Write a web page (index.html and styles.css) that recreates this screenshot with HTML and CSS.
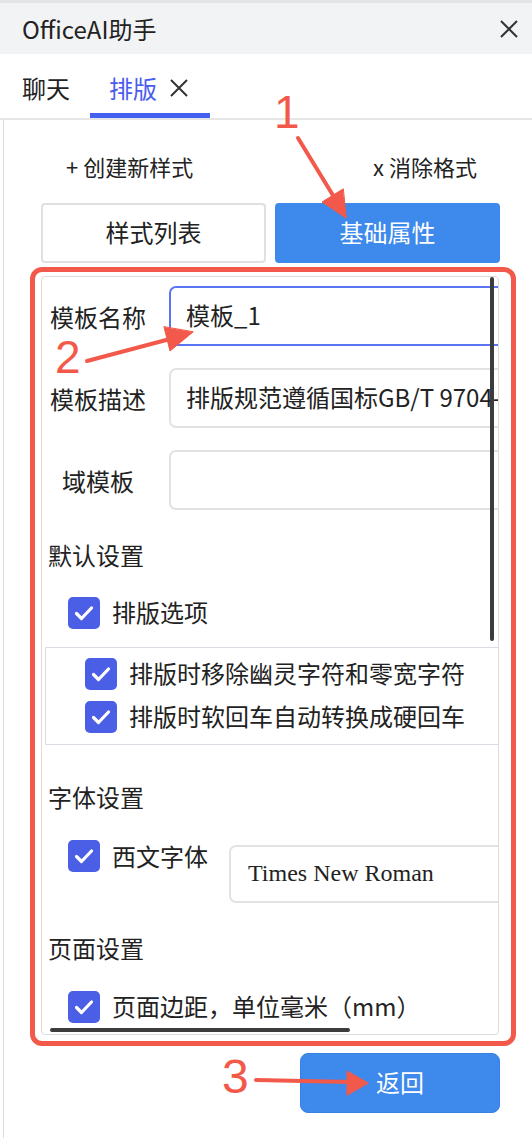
FILE: index.html
```html
<!DOCTYPE html>
<html lang="zh-CN">
<head>
<meta charset="utf-8">
<title>OfficeAI助手</title>
<link rel="stylesheet" href="styles.css">
</head>
<body>
<header class="titlebar">
  <span class="title">OfficeAI助手</span>
  <svg class="close" width="20" height="20" viewBox="0 0 20 20"><path d="M2 2L18 18M18 2L2 18" stroke="#333" stroke-width="2" fill="none"/></svg>
</header>
<nav class="tabbar">
  <div class="tab">聊天</div>
  <div class="tab active">排版
    <svg class="tabx" width="20" height="20" viewBox="0 0 20 20"><path d="M2 2L18 18M18 2L2 18" stroke="#333" stroke-width="2" fill="none"/></svg>
  </div>
</nav>
<main class="content">
  <div class="actions">
    <span>+ 创建新样式</span>
    <span>x 消除格式</span>
  </div>
  <div class="seg">
    <button class="seg-btn">样式列表</button>
    <button class="seg-btn primary">基础属性</button>
  </div>
  <div class="panel-wrap">
    <section class="panel">
      <div class="form">
        <div class="form-row">
          <label class="form-label">模板名称</label>
          <input class="field focus" value="模板_1">
        </div>
        <div class="form-row">
          <label class="form-label">模板描述</label>
          <input class="field" value="排版规范遵循国标GB/T 9704-2012">
        </div>
        <div class="form-row">
          <label class="form-label">域模板</label>
          <input class="field" value="">
        </div>
      </div>

      <h3 class="section">默认设置</h3>
      <div class="check main-check">
        <svg class="cb" width="32" height="32" viewBox="0 0 32 32"><rect width="32" height="32" rx="5" fill="#4a5fe6"/><path d="M8.5 16.5L13.5 21.5L23.5 11" stroke="#fff" stroke-width="3.2" fill="none" stroke-linecap="round" stroke-linejoin="round"/></svg>
        <span>排版选项</span>
      </div>
      <div class="subbox">
        <div class="check">
          <svg class="cb" width="32" height="32" viewBox="0 0 32 32"><rect width="32" height="32" rx="5" fill="#4a5fe6"/><path d="M8.5 16.5L13.5 21.5L23.5 11" stroke="#fff" stroke-width="3.2" fill="none" stroke-linecap="round" stroke-linejoin="round"/></svg>
          <span>排版时移除幽灵字符和零宽字符</span>
        </div>
        <div class="check">
          <svg class="cb" width="32" height="32" viewBox="0 0 32 32"><rect width="32" height="32" rx="5" fill="#4a5fe6"/><path d="M8.5 16.5L13.5 21.5L23.5 11" stroke="#fff" stroke-width="3.2" fill="none" stroke-linecap="round" stroke-linejoin="round"/></svg>
          <span>排版时软回车自动转换成硬回车</span>
        </div>
      </div>

      <h3 class="section font-section">字体设置</h3>
      <div class="font-row">
        <svg class="cb" width="32" height="32" viewBox="0 0 32 32"><rect width="32" height="32" rx="5" fill="#4a5fe6"/><path d="M8.5 16.5L13.5 21.5L23.5 11" stroke="#fff" stroke-width="3.2" fill="none" stroke-linecap="round" stroke-linejoin="round"/></svg>
        <span class="font-label">西文字体</span>
        <input class="field serif" value="Times New Roman">
      </div>

      <h3 class="section page-section">页面设置</h3>
      <div class="check main-check page-check">
        <svg class="cb" width="32" height="32" viewBox="0 0 32 32"><rect width="32" height="32" rx="5" fill="#4a5fe6"/><path d="M8.5 16.5L13.5 21.5L23.5 11" stroke="#fff" stroke-width="3.2" fill="none" stroke-linecap="round" stroke-linejoin="round"/></svg>
        <span>页面边距，单位毫米（mm）</span>
      </div>

      <div class="vscroll"></div>
      <div class="hscroll"></div>
    </section>
  </div>
  <div class="footer">
    <button class="back-btn">返回</button>
  </div>
</main>

<div class="annot">
  <svg class="arrows" width="532" height="1138" viewBox="0 0 532 1138">
    <g stroke="#f3594a" stroke-width="4" stroke-linecap="round" fill="#f3594a">
      <line x1="298" y1="138" x2="334" y2="197"/>
      <polygon points="346,218 322,202 343,189" stroke-width="1"/>
      <line x1="87" y1="361" x2="170" y2="339"/>
      <polygon points="193,332 170,351 164,327" stroke-width="1"/>
      <line x1="256" y1="1080" x2="352" y2="1082"/>
      <polygon points="368,1083 347,1071 347,1095" stroke-width="1"/>
    </g>
  </svg>
  <span class="num n1">1</span>
  <span class="num n2">2</span>
  <span class="num n3">3</span>
</div>
</body>
</html>
```

FILE: styles.css
```css
* { box-sizing: border-box; }

html, body {
  margin: 0;
  padding: 0;
}

body {
  position: relative;
  width: 532px;
  height: 1138px;
  overflow: hidden;
  background: #fff;
  color: #222;
  font-family: "Noto Sans CJK SC", "Noto Sans", sans-serif;
}

/* title bar */
.titlebar {
  height: 54px;
  border-top: 3px solid #e3e4e6;
  background: #f2f3f5;
  display: flex;
  align-items: center;
  justify-content: space-between;
  padding: 0 13px 0 22px;
}
.title {
  font-size: 24px;
  line-height: 30px;
  color: #222;
}

/* tabs */
.tabbar {
  height: 66px;
  display: flex;
  border-bottom: 2px solid #e6e6e6;
  padding-left: 22px;
  gap: 20px;
}
.tab {
  height: 64px;
  display: flex;
  align-items: center;
  padding-top: 4px;
  font-size: 24px;
  line-height: 32px;
  color: #222;
}
.tab.active {
  color: #4a5cf0;
  padding: 4px 21px 0 19px;
  gap: 12px;
  box-shadow: inset 0 -5px 0 #4361ee;
}
.tabx { display: block; }

/* content */
.content {
  margin-left: 3px;
  border-left: 1px solid #dcdcdc;
  height: 1018px;
}

.actions {
  display: flex;
  justify-content: space-between;
  padding: 31px 55px 0 62px;
  font-size: 22px;
  line-height: 30px;
  color: #222;
}

.seg {
  display: flex;
  gap: 9px;
  margin: 22px 32px 0 37px;
}
.seg-btn {
  flex: 1;
  height: 60px;
  font: inherit;
  font-size: 24px;
  color: #222;
  background: #fff;
  border: 2px solid #e0e0e0;
  border-radius: 4px;
  padding: 0 0 3px;
}
.seg-btn.primary {
  background: #3d89ec;
  border-color: #3d89ec;
  color: #fff;
}

/* panel */
.panel-wrap {
  position: relative;
  margin: 13px 33px 0 37px;
}
.panel-wrap::after {
  content: "";
  position: absolute;
  top: -9px;
  left: -11px;
  right: -17px;
  bottom: -11px;
  border: 5px solid #f3594a;
  border-radius: 12px;
  pointer-events: none;
}
.panel {
  position: relative;
  height: 759px;
  border: 1px solid #dcdcdc;
  border-radius: 4px;
  overflow: hidden;
}

.form {
  display: flex;
  flex-direction: column;
  gap: 22px;
  padding-top: 9px;
}
.form-row {
  display: flex;
  align-items: center;
  height: 60px;
}
.form-label {
  width: 112px;
  flex: none;
  text-align: center;
  font-size: 24px;
  line-height: 32px;
  padding-top: 2px;
}
.field {
  flex: none;
  width: 360px;
  height: 60px;
  margin-left: 15px;
  padding: 0 15px 3px;
  border: 2px solid #e2e2e2;
  border-radius: 7px;
  font: inherit;
  font-size: 24px;
  color: #222;
  background: #fff;
  outline: none;
}
.field.focus { border-color: #5b74f2; }

.section {
  margin: 29px 0 0 6px;
  font-size: 24px;
  line-height: 32px;
  font-weight: normal;
}

.check {
  display: flex;
  align-items: center;
  gap: 12px;
  font-size: 24px;
  line-height: 30px;
  height: 32px;
  white-space: nowrap;
}
.check span { padding-bottom: 2px; }
.cb { display: block; flex: none; }
.main-check {
  margin-top: 26px;
  padding-left: 26px;
}

.subbox {
  margin: 18px 0 0 3px;
  border: 1px solid #d9dde3;
  border-right: none;
  padding: 10px 0 11px 39px;
  display: flex;
  flex-direction: column;
  gap: 11px;
}

.font-section { margin-top: 36px; }

.font-row {
  display: flex;
  align-items: flex-start;
  margin-top: 27px;
  padding-left: 26px;
  font-size: 24px;
  line-height: 32px;
}
.font-label {
  flex: none;
  white-space: nowrap;
  margin-left: 12px;
}
.field.serif {
  width: 300px;
  margin-top: 5px;
  margin-left: 21px;
  height: 58px;
  padding: 0 15px 2px 17px;
  font-family: "Liberation Serif", "Times New Roman", serif;
  font-size: 24px;
}

.page-section { margin-top: 29px; }
.page-check { margin-top: 27px; }

.vscroll {
  position: absolute;
  top: 0;
  right: 4px;
  width: 4px;
  height: 364px;
  background: #3c3c3c;
  border-radius: 2px;
}
.hscroll {
  position: absolute;
  left: 8px;
  bottom: 2px;
  width: 300px;
  height: 4px;
  background: #3c3c3c;
  border-radius: 2px;
}

.footer {
  display: flex;
  justify-content: flex-end;
  margin: 18px 32px 0 0;
}
.back-btn {
  width: 200px;
  height: 60px;
  background: #3d89ec;
  border: 1px solid #3680e2;
  border-radius: 8px;
  color: #fff;
  font: inherit;
  font-size: 24px;
  padding: 0 0 3px;
}

/* annotations */
.annot {
  position: absolute;
  inset: 0;
  pointer-events: none;
}
.arrows {
  position: absolute;
  left: 0;
  top: 0;
}
.num {
  position: absolute;
  font-family: "Liberation Sans", Arial, sans-serif;
  font-size: 46px;
  line-height: 46px;
  color: #f3594a;
}
.n1 { left: 274px; top: 89px; }
.n2 { left: 55px; top: 334px; }
.n3 { left: 222px; top: 1053px; font-size: 48px; line-height: 48px; }
```
